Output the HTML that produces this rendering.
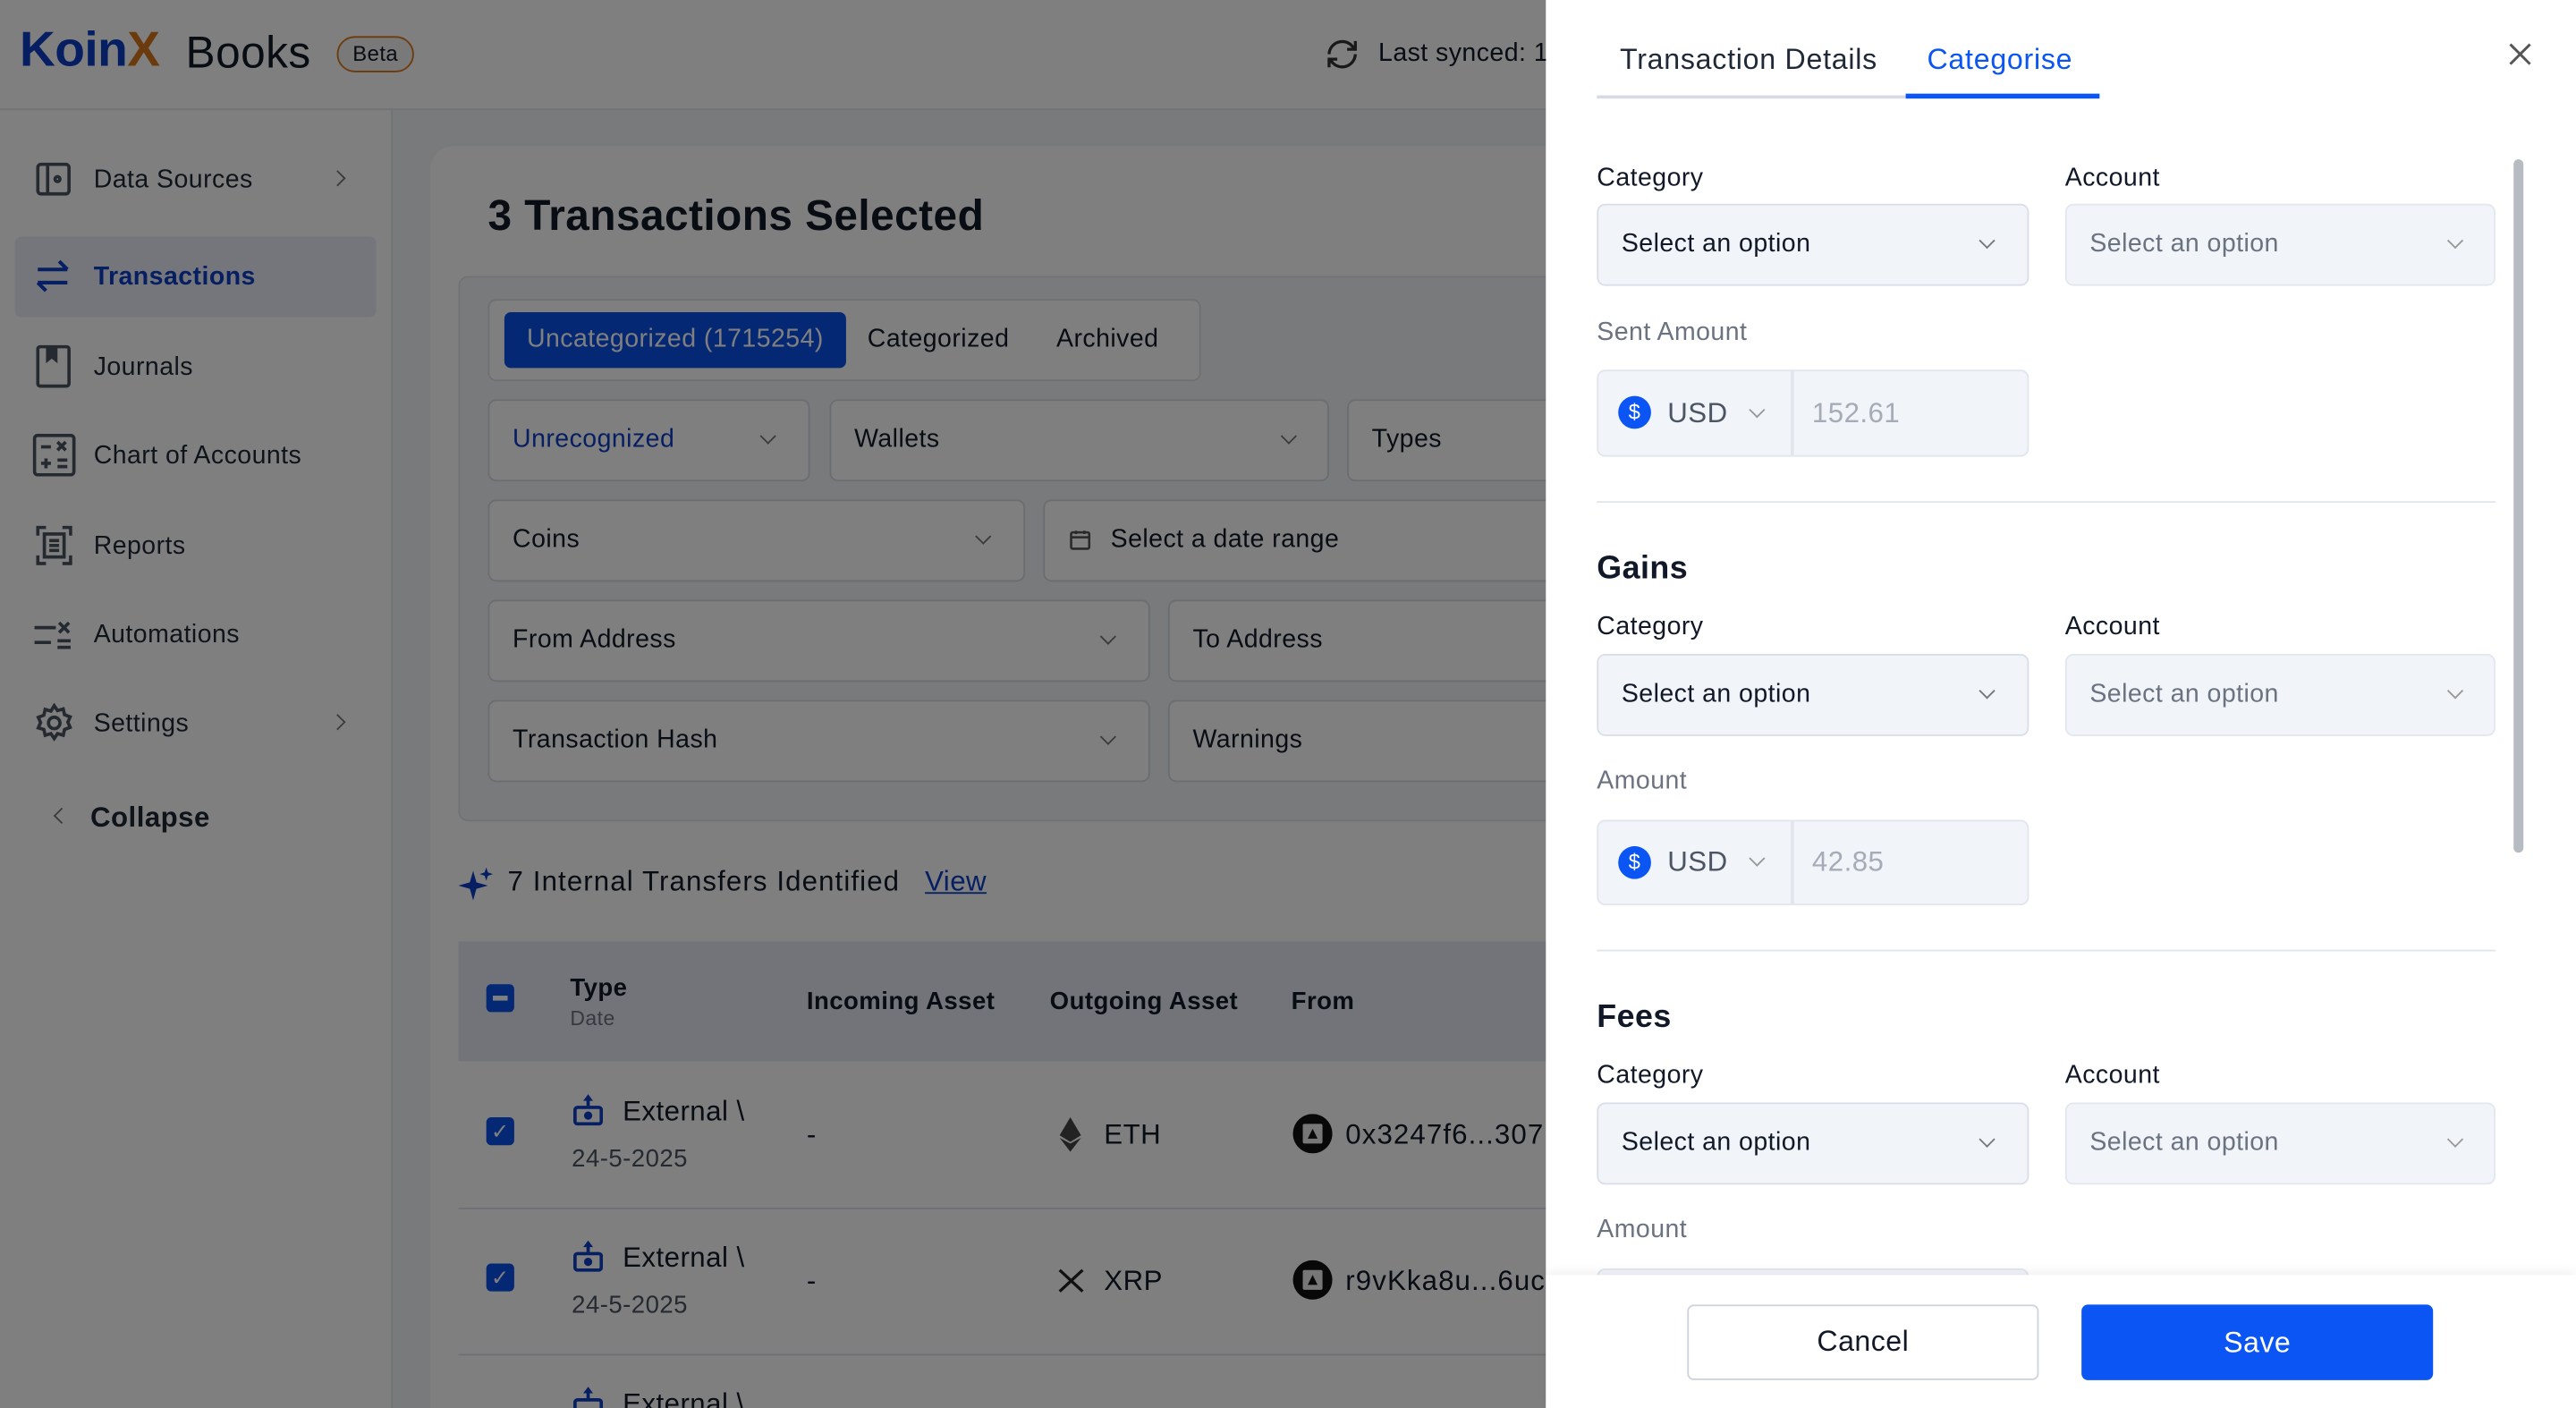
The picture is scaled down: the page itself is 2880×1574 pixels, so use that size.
<!DOCTYPE html>
<html><head><meta charset="utf-8"><style>
*{box-sizing:border-box;margin:0;padding:0}
html,body{width:2880px;height:1574px;overflow:hidden;background:#fff}
#w{width:1568px;height:857px;transform:scale(1.836735);transform-origin:0 0;position:relative;font-family:"Liberation Sans",sans-serif;color:#111827;overflow:hidden;letter-spacing:0.25px}
.a{position:absolute}
.t{position:absolute;white-space:nowrap;line-height:1}
.dd{position:absolute;border:1px solid #d5dae3;border-radius:5px;background:#fff;font-size:15.5px;padding-left:14px;display:flex;align-items:center}
.chev{position:absolute;width:7px;height:7px;border-right:1.4px solid #777;border-bottom:1.4px solid #777;transform:rotate(45deg)}
.nav{position:absolute;left:57px;font-size:15.5px;color:#1f2937}
.sel{position:absolute;background:#f1f4f9;border:1.5px solid #d9dee7;border-radius:5px;font-size:15.5px;padding-left:14px;display:flex;align-items:center}
.lbl{position:absolute;font-size:15.5px;color:#111827}
.cur{position:absolute;background:#f1f4f9;border:1.5px solid #e1e5ec;border-radius:5px}
</style></head><body><div id="w">
<div class="a" style="left:0;top:0;width:1568px;height:67px;background:#fff;border-bottom:1px solid #e3e6eb"></div>
<div class="t" style="left:12px;top:16px;font-size:30px;font-weight:700;color:#0c3cc4;letter-spacing:-0.3px">Koin<span style="color:#d9761a">X</span></div>
<div class="t" style="left:113px;top:19px;font-size:27px;color:#111827">Books</div>
<div class="a" style="left:205px;top:22px;width:47px;height:22px;border:1.5px solid #d9761a;border-radius:11px;background:#f2f2f2;font-size:13px;text-align:center;line-height:19px">Beta</div>
<svg class="a" style="left:805px;top:22px" width="24" height="22" viewBox="0 0 24 22" fill="none" stroke="#333" stroke-width="1.8"><path d="M4 11a8 8 0 0 1 14-5l2 2M20 3v5h-5M20 11a8 8 0 0 1-14 5l-2-2M4 19v-5h5"/></svg>
<div class="t" style="left:839px;top:25px;font-size:15.5px">Last synced: 1</div>
<div class="a" style="left:0;top:67px;width:239px;height:790px;background:#fff;border-right:1px solid #e3e6eb"></div>
<div class="a" style="left:239px;top:67px;width:720px;height:790px;background:#f3f5f8"></div>
<svg class="a" style="left:22px;top:98px" width="22" height="22" viewBox="0 0 22 22" fill="none" stroke="#4b5563" stroke-width="2"><rect x="1" y="2" width="19" height="18" rx="2"/><path d="M7 2v18"/><circle cx="13" cy="11" r="1.5"/></svg>
<div class="nav" style="top:101px">Data Sources</div>
<div class="chev" style="left:202px;top:105px;transform:rotate(-45deg)"></div>
<div class="a" style="left:9px;top:144px;width:220px;height:49px;background:#e8edf7;border-radius:4px"></div>
<svg class="a" style="left:21px;top:158px" width="22" height="20" viewBox="0 0 22 20" fill="none" stroke="#0c3cc4" stroke-width="2.2"><path d="M2 6h18M15 1l5 5M20 14H2M7 19l-5-5"/></svg>
<div class="nav" style="top:160px;color:#0c3cc4;font-weight:700">Transactions</div>
<svg class="a" style="left:22px;top:210px" width="22" height="26" viewBox="0 0 22 26" fill="none" stroke="#4b5563" stroke-width="2"><rect x="1" y="1" width="19" height="24" rx="1.5"/><path d="M7 1v8l2.5-2 2.5 2V1" fill="#4b5563"/></svg>
<div class="nav" style="top:215px">Journals</div>
<svg class="a" style="left:20px;top:264px" width="26" height="26" viewBox="0 0 26 26" fill="none" stroke="#4b5563" stroke-width="2"><rect x="1" y="1" width="24" height="24" rx="2"/><path d="M5 8h6M15 5l5 5M20 5l-5 5M5 18h6M8 15v6M15 16h6M15 20h6"/></svg>
<div class="nav" style="top:269px">Chart of Accounts</div>
<svg class="a" style="left:22px;top:320px" width="22" height="24" viewBox="0 0 22 24" fill="none" stroke="#4b5563" stroke-width="2"><path d="M1 6V1h5M16 1h5v5M21 18v5h-5M6 23H1v-5"/><rect x="5" y="5" width="12" height="14"/><path d="M8 9h6M8 12h6M8 15h6"/></svg>
<div class="nav" style="top:324px">Reports</div>
<svg class="a" style="left:20px;top:377px" width="24" height="20" viewBox="0 0 24 20" fill="none" stroke="#4b5563" stroke-width="2"><path d="M1 5h13M1 14h10M16 2l6 6M22 2l-6 6M15 13h8M15 17h8"/></svg>
<div class="nav" style="top:378px">Automations</div>
<svg class="a" style="left:21px;top:428px" width="24" height="24" viewBox="0 0 24 24" fill="none" stroke="#4b5563" stroke-width="2"><circle cx="12" cy="12" r="3.5"/><path d="M12 1.5l2 3 3.5-1 .8 3.5 3.4 1.3-1.4 3.2 1.4 3.2-3.4 1.3-.8 3.5-3.5-1-2 3-2-3-3.5 1-.8-3.5L2.3 15l1.4-3.2L2.3 8.6l3.4-1.3.8-3.5 3.5 1z"/></svg>
<div class="nav" style="top:432px">Settings</div>
<div class="chev" style="left:202px;top:436px;transform:rotate(-45deg)"></div>
<div class="chev" style="left:34px;top:493px;transform:rotate(135deg)"></div>
<div class="nav" style="left:55px;top:488px;font-size:17px;font-weight:600">Collapse</div>
<div class="a" style="left:262px;top:89px;width:700px;height:800px;background:#fff;border-radius:14px"></div>
<div class="t" style="left:297px;top:118px;font-size:26px;font-weight:700;color:#111827">3 Transactions Selected</div>
<div class="a" style="left:279px;top:168px;width:700px;height:332px;background:#f3f4f6;border:1px solid #e2e5ea;border-radius:6px"></div>
<div class="a" style="left:297px;top:182px;width:434px;height:50px;background:#fff;border:1px solid #dde1e7;border-radius:5px"></div>
<div class="a" style="left:307px;top:190px;width:208px;height:34px;background:#0b50e8;border-radius:4px;color:#fff;font-size:15.5px;text-align:center;line-height:34px">Uncategorized (1715254)</div>
<div class="t" style="left:528px;top:199px;font-size:15.5px">Categorized</div>
<div class="t" style="left:643px;top:199px;font-size:15.5px">Archived</div>
<div class="dd" style="left:297px;top:243px;width:196px;height:50px;color:#0c3cc4">Unrecognized<div class="chev" style="left:166px;top:18px"></div></div>
<div class="dd" style="left:505px;top:243px;width:304px;height:50px">Wallets<div class="chev" style="left:275px;top:18px"></div></div>
<div class="dd" style="left:820px;top:243px;width:200px;height:50px">Types</div>
<div class="dd" style="left:297px;top:304px;width:327px;height:50px">Coins<div class="chev" style="left:297px;top:18px"></div></div>
<div class="dd" style="left:635px;top:304px;width:380px;height:50px;padding-left:40px">Select a date range</div>
<svg class="a" style="left:651px;top:322px" width="13" height="13" viewBox="0 0 13 13" fill="none" stroke="#555" stroke-width="1.4"><rect x="1" y="2" width="11" height="10" rx="1"/><path d="M1 5h11M4 1v2M9 1v2"/></svg>
<div class="dd" style="left:297px;top:365px;width:403px;height:50px">From Address<div class="chev" style="left:373px;top:18px"></div></div>
<div class="dd" style="left:711px;top:365px;width:300px;height:50px">To Address</div>
<div class="dd" style="left:297px;top:426px;width:403px;height:50px">Transaction Hash<div class="chev" style="left:373px;top:18px"></div></div>
<div class="dd" style="left:711px;top:426px;width:300px;height:50px">Warnings</div>
<svg class="a" style="left:279px;top:527px" width="22" height="22" viewBox="0 0 22 22" fill="#0c3cc4"><path d="M9 3l2 7 7 2-7 2-2 7-2-7-7-2 7-2z"/><path d="M17 1l1 3 3 1-3 1-1 3-1-3-3-1 3-1z"/></svg>
<div class="t" style="left:309px;top:528px;font-size:17px;letter-spacing:0.6px">7 Internal Transfers Identified</div>
<div class="t" style="left:563px;top:528px;font-size:17px;color:#0c3cc4;text-decoration:underline">View</div>
<div class="a" style="left:279px;top:573px;width:700px;height:73px;background:#e5e9f2"></div>
<div class="a" style="left:296px;top:599px;width:17px;height:17px;background:#0b50e8;border-radius:3px"><div class="a" style="left:4px;top:7px;width:9px;height:3px;background:#fff"></div></div>
<div class="t" style="left:347px;top:594px;font-size:15px;font-weight:600">Type</div>
<div class="t" style="left:347px;top:614px;font-size:12.5px;color:#6b7280">Date</div>
<div class="t" style="left:491px;top:602px;font-size:15px;font-weight:600">Incoming Asset</div>
<div class="t" style="left:639px;top:602px;font-size:15px;font-weight:600">Outgoing Asset</div>
<div class="t" style="left:786px;top:602px;font-size:15px;font-weight:600">From</div>
<div class="a" style="left:279px;top:735px;width:700px;height:1px;background:#dde1e7"></div>
<div class="a" style="left:279px;top:824px;width:700px;height:1px;background:#dde1e7"></div>
<div class="a" style="left:296px;top:680px;width:17px;height:17px;background:#0b50e8;border-radius:3px;color:#fff;font-size:13px;text-align:center;line-height:17px">✓</div>
<div class="a" style="left:296px;top:769px;width:17px;height:17px;background:#0b50e8;border-radius:3px;color:#fff;font-size:13px;text-align:center;line-height:17px">✓</div>
<svg class="a" style="left:349px;top:666px" width="18" height="20" viewBox="0 0 18 20" fill="#0c3cc4"><path d="M9 0l3 4h-2v3H8V4H6z"/><rect x="1" y="8" width="16" height="10" rx="1.5" fill="none" stroke="#0c3cc4" stroke-width="2"/><circle cx="9" cy="13" r="2.5"/></svg>
<svg class="a" style="left:349px;top:755px" width="18" height="20" viewBox="0 0 18 20" fill="#0c3cc4"><path d="M9 0l3 4h-2v3H8V4H6z"/><rect x="1" y="8" width="16" height="10" rx="1.5" fill="none" stroke="#0c3cc4" stroke-width="2"/><circle cx="9" cy="13" r="2.5"/></svg>
<svg class="a" style="left:349px;top:844px" width="18" height="20" viewBox="0 0 18 20" fill="#0c3cc4"><path d="M9 0l3 4h-2v3H8V4H6z"/><rect x="1" y="8" width="16" height="10" rx="1.5" fill="none" stroke="#0c3cc4" stroke-width="2"/></svg>
<div class="t" style="left:379px;top:668px;font-size:17px">External \</div>
<div class="t" style="left:348px;top:698px;font-size:15px;color:#4b5563">24-5-2025</div>
<div class="t" style="left:379px;top:757px;font-size:17px">External \</div>
<div class="t" style="left:348px;top:787px;font-size:15px;color:#4b5563">24-5-2025</div>
<div class="t" style="left:379px;top:846px;font-size:17px">External \</div>
<div class="t" style="left:491px;top:682px;font-size:17px">-</div>
<div class="t" style="left:491px;top:771px;font-size:17px">-</div>
<svg class="a" style="left:645px;top:680px" width="13" height="21" viewBox="0 0 13 21" fill="#444"><path d="M6.5 0L0 11l6.5 4 6.5-4z"/><path d="M6.5 16L0 12.5 6.5 21 13 12.5z"/></svg>
<div class="t" style="left:672px;top:682px;font-size:17px">ETH</div>
<svg class="a" style="left:644px;top:772px" width="16" height="15" viewBox="0 0 16 15" fill="none" stroke="#222" stroke-width="1.8"><path d="M1 1l7 6.5L15 1M1 14l7-6.5 7 6.5"/></svg>
<div class="t" style="left:672px;top:771px;font-size:17px">XRP</div>
<svg class="a" style="left:787px;top:678px" width="24" height="24" viewBox="0 0 24 24"><circle cx="12" cy="12" r="12" fill="#111"/><rect x="6" y="6" width="12" height="12" rx="1" fill="#eee"/><path d="M12 9l3 6H9z" fill="#111"/></svg>
<svg class="a" style="left:787px;top:767px" width="24" height="24" viewBox="0 0 24 24"><circle cx="12" cy="12" r="12" fill="#111"/><rect x="6" y="6" width="12" height="12" rx="1" fill="#eee"/><path d="M12 9l3 6H9z" fill="#111"/></svg>
<div class="t" style="left:819px;top:682px;font-size:17px;letter-spacing:0.6px">0x3247f6...307</div>
<div class="t" style="left:819px;top:771px;font-size:17px;letter-spacing:0.6px">r9vKka8u...6uc</div>
<div class="a" style="left:0;top:0;width:941px;height:857px;background:rgba(0,0,0,0.5)"></div>
<div class="a" style="left:941px;top:0;width:627px;height:857px;background:#fff"></div>
<div class="t" style="left:986px;top:28px;font-size:17.5px;color:#1f2937;letter-spacing:0.4px">Transaction Details</div>
<div class="t" style="left:1173px;top:28px;font-size:17.5px;color:#0b55f5;letter-spacing:0.4px">Categorise</div>
<div class="a" style="left:972px;top:58px;width:188px;height:1.5px;background:#d6dbe4"></div>
<div class="a" style="left:1160px;top:57px;width:118px;height:3px;background:#0b55f5"></div>
<svg class="a" style="left:1527px;top:26px" width="14" height="14" viewBox="0 0 14 14" stroke="#555" stroke-width="1.6"><path d="M1 1l12 12M13 1L1 13"/></svg>
<div class="a" style="left:1530px;top:97px;width:6px;height:422px;background:#b7bbc2;border-radius:3px"></div>
<div class="lbl" style="left:972px;top:100px">Category</div>
<div class="lbl" style="left:1257px;top:100px">Account</div>
<div class="sel" style="left:972px;top:124px;width:263px;height:50px">Select an option<div class="chev" style="left:233px;top:18px"></div></div>
<div class="sel" style="left:1257px;top:124px;width:262px;height:50px;color:#6b7280;border-color:#e3e7ee">Select an option<div class="chev" style="left:233px;top:18px;border-color:#999"></div></div>
<div class="lbl" style="left:972px;top:194px;color:#6b7280">Sent Amount</div>
<div class="cur" style="left:972px;top:225px;width:263px;height:53px"></div>
<div class="a" style="left:1090px;top:226px;width:1.5px;height:51px;background:#e1e5ec"></div>
<div class="a" style="left:985px;top:241px;width:20px;height:20px;border-radius:50%;background:#0b55f5;color:#fff;font-size:13px;text-align:center;line-height:20px">$</div>
<div class="t" style="left:1015px;top:243px;font-size:17px;color:#4b5563">USD</div>
<div class="chev" style="left:1066px;top:246px;border-color:#999"></div>
<div class="t" style="left:1103px;top:243px;font-size:17px;color:#a5acb8">152.61</div>
<div class="a" style="left:972px;top:305px;width:547px;height:1px;background:#e1e5ec"></div>
<div class="t" style="left:972px;top:337px;font-size:19.5px;font-weight:700">Gains</div>
<div class="lbl" style="left:972px;top:373px">Category</div>
<div class="lbl" style="left:1257px;top:373px">Account</div>
<div class="sel" style="left:972px;top:398px;width:263px;height:50px">Select an option<div class="chev" style="left:233px;top:18px"></div></div>
<div class="sel" style="left:1257px;top:398px;width:262px;height:50px;color:#6b7280;border-color:#e3e7ee">Select an option<div class="chev" style="left:233px;top:18px;border-color:#999"></div></div>
<div class="lbl" style="left:972px;top:467px;color:#6b7280">Amount</div>
<div class="cur" style="left:972px;top:499px;width:263px;height:52px"></div>
<div class="a" style="left:1090px;top:500px;width:1.5px;height:50px;background:#e1e5ec"></div>
<div class="a" style="left:985px;top:515px;width:20px;height:20px;border-radius:50%;background:#0b55f5;color:#fff;font-size:13px;text-align:center;line-height:20px">$</div>
<div class="t" style="left:1015px;top:516px;font-size:17px;color:#4b5563">USD</div>
<div class="chev" style="left:1066px;top:519px;border-color:#999"></div>
<div class="t" style="left:1103px;top:516px;font-size:17px;color:#a5acb8">42.85</div>
<div class="a" style="left:972px;top:578px;width:547px;height:1px;background:#e1e5ec"></div>
<div class="t" style="left:972px;top:610px;font-size:19.5px;font-weight:700">Fees</div>
<div class="lbl" style="left:972px;top:646px">Category</div>
<div class="lbl" style="left:1257px;top:646px">Account</div>
<div class="sel" style="left:972px;top:671px;width:263px;height:50px">Select an option<div class="chev" style="left:233px;top:18px"></div></div>
<div class="sel" style="left:1257px;top:671px;width:262px;height:50px;color:#6b7280;border-color:#e3e7ee">Select an option<div class="chev" style="left:233px;top:18px;border-color:#999"></div></div>
<div class="lbl" style="left:972px;top:740px;color:#6b7280">Amount</div>
<div class="cur" style="left:972px;top:772px;width:263px;height:52px"></div>
<div class="a" style="left:941px;top:776px;width:627px;height:81px;background:#fff;box-shadow:0 -2px 6px rgba(0,0,0,0.06)"></div>
<div class="a" style="left:1027px;top:794px;width:214px;height:46px;border:1.5px solid #cfd4dc;border-radius:4px;font-size:17.5px;text-align:center;line-height:43px;color:#111827">Cancel</div>
<div class="a" style="left:1267px;top:794px;width:214px;height:46px;background:#0b55f5;border-radius:4px;font-size:17.5px;text-align:center;line-height:46px;color:#fff">Save</div>
</div></body></html>
